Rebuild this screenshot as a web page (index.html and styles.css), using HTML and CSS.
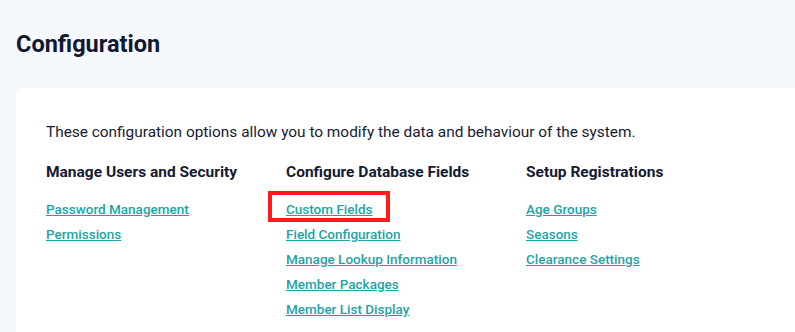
FILE: index.html
```html
<!DOCTYPE html>
<html lang="en">
<head>
    <meta charset="UTF-8">
    <title>Configuration</title>
    <link rel="stylesheet" href="styles.css">
</head>
<body>
    <h1 class="page-title">Configuration</h1>
    <div class="card">
        <p class="intro">These configuration options allow you to modify the data and behaviour of the system.</p>
        <div class="columns">
            <div class="column">
                <h2>Manage Users and Security</h2>
                <ul class="links">
                    <li><a href="#">Password Management</a></li>
                    <li><a href="#">Permissions</a></li>
                </ul>
            </div>
            <div class="column">
                <h2>Configure Database Fields</h2>
                <ul class="links">
                    <li class="highlight"><a href="#">Custom Fields</a></li>
                    <li><a href="#">Field Configuration</a></li>
                    <li><a href="#">Manage Lookup Information</a></li>
                    <li><a href="#">Member Packages</a></li>
                    <li><a href="#">Member List Display</a></li>
                </ul>
            </div>
            <div class="column">
                <h2>Setup Registrations</h2>
                <ul class="links">
                    <li><a href="#">Age Groups</a></li>
                    <li><a href="#">Seasons</a></li>
                    <li><a href="#">Clearance Settings</a></li>
                </ul>
            </div>
        </div>
    </div>
</body>
</html>
```

FILE: styles.css
```css
body {
    margin: 0;
    background-color: #f5f8fc;
    font-family: 'Roboto', 'Liberation Sans', sans-serif;
    color: #151a35;
    overflow: hidden;
    height: 332px;
}

.page-title {
    margin: 0;
    padding: 31px 16px 0;
    font-size: 23.5px;
    line-height: 26px;
    font-weight: 700;
    color: #121833;
}

.card {
    margin: 31px -20px 0 16px;
    padding: 34px 30px 40px;
    background-color: #fff;
    border-radius: 6px;
}

.intro {
    margin: 0;
    font-size: 15.4px;
    line-height: 20px;
}

.columns {
    display: grid;
    grid-template-columns: 240px 240px 240px;
    margin-top: 20px;
}

.column h2 {
    margin: 0;
    font-size: 15.5px;
    line-height: 20px;
    font-weight: 700;
}

.links {
    list-style: none;
    margin: 15px 0 0;
    padding: 0;
}

.links li {
    line-height: 25px;
    font-size: 13.5px;
}

.links a {
    color: #1fa3a7;
    font-weight: 500;
    text-decoration: underline;
}

.highlight {
    position: relative;
}

.highlight::after {
    content: "";
    position: absolute;
    left: -18px;
    top: -6px;
    width: 122px;
    height: 31px;
    border: 4px solid #ff1b1b;
    box-sizing: border-box;
}
```
